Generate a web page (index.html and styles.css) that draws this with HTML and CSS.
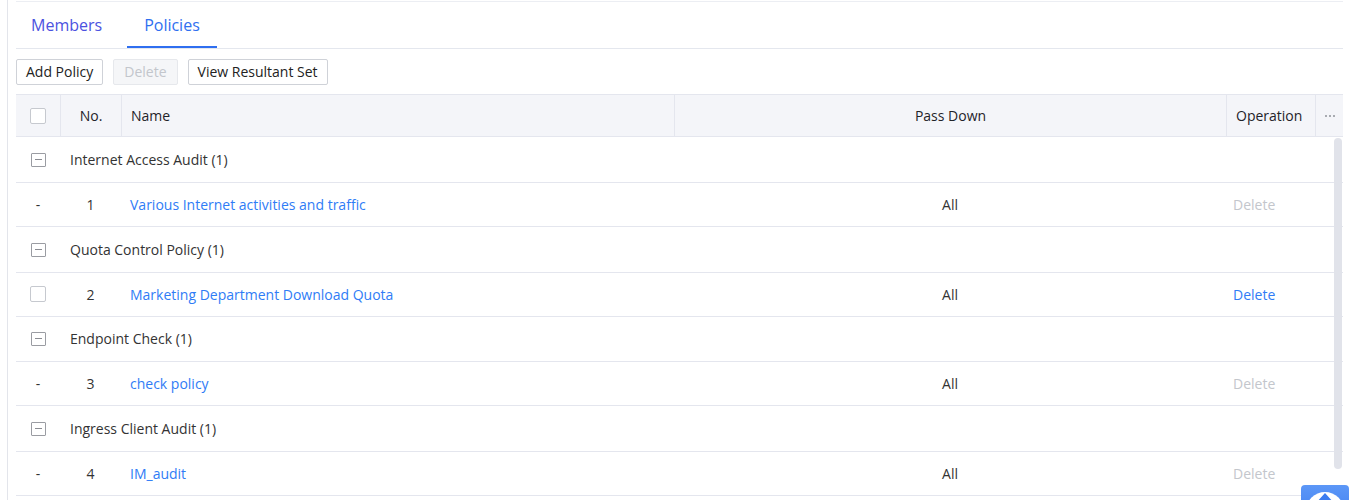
FILE: index.html
```html
<!DOCTYPE html>
<html>
<head>
<meta charset="utf-8">
<link rel="stylesheet" href="styles.css">
</head>
<body>
<div class="page">
  <div class="main">
    <div class="tabs">
      <div class="tab">Members</div>
      <div class="tab active">Policies</div>
    </div>
    <div class="toolbar">
      <button class="btn">Add Policy</button>
      <button class="btn disabled">Delete</button>
      <button class="btn">View Resultant Set</button>
    </div>
    <div class="grid">
      <div class="row head">
        <div class="cell c-check"><span class="checkbox"></span></div>
        <div class="cell c-no sep">No.</div>
        <div class="cell c-name sep">Name</div>
        <div class="cell c-pass sep">Pass Down</div>
        <div class="cell c-op sep">Operation</div>
        <div class="cell c-more sep"><span class="dots"><i></i><i></i><i></i></span></div>
      </div>
      <div class="body">
        <div class="row group">
          <div class="cell c-check"><span class="minus"></span></div>
          <div class="cell c-group">Internet Access Audit (1)</div>
        </div>
        <div class="row data">
          <div class="cell c-check">-</div>
          <div class="cell c-no">1</div>
          <div class="cell c-name"><a class="link">Various Internet activities and traffic</a></div>
          <div class="cell c-pass">All</div>
          <div class="cell c-op"><span class="op-off">Delete</span></div>
          <div class="cell c-more"></div>
        </div>
        <div class="row group">
          <div class="cell c-check"><span class="minus"></span></div>
          <div class="cell c-group">Quota Control Policy (1)</div>
        </div>
        <div class="row data">
          <div class="cell c-check"><span class="checkbox"></span></div>
          <div class="cell c-no">2</div>
          <div class="cell c-name"><a class="link">Marketing Department Download Quota</a></div>
          <div class="cell c-pass">All</div>
          <div class="cell c-op"><a class="link">Delete</a></div>
          <div class="cell c-more"></div>
        </div>
        <div class="row group short">
          <div class="cell c-check"><span class="minus"></span></div>
          <div class="cell c-group">Endpoint Check (1)</div>
        </div>
        <div class="row data">
          <div class="cell c-check">-</div>
          <div class="cell c-no">3</div>
          <div class="cell c-name"><a class="link">check policy</a></div>
          <div class="cell c-pass">All</div>
          <div class="cell c-op"><span class="op-off">Delete</span></div>
          <div class="cell c-more"></div>
        </div>
        <div class="row group">
          <div class="cell c-check"><span class="minus"></span></div>
          <div class="cell c-group">Ingress Client Audit (1)</div>
        </div>
        <div class="row data">
          <div class="cell c-check">-</div>
          <div class="cell c-no">4</div>
          <div class="cell c-name"><a class="link">IM_audit</a></div>
          <div class="cell c-pass">All</div>
          <div class="cell c-op"><span class="op-off">Delete</span></div>
          <div class="cell c-more"></div>
        </div>
        <div class="scrollbar"></div>
      </div>
    </div>
  </div>
  <div class="backtop">
    <svg width="48" height="40" viewBox="0 0 48 40">
      <circle cx="24" cy="26" r="19" fill="#ffffff"/>
      <path d="M24 8 L33 18 L27.5 18 L27.5 30 L20.5 30 L20.5 18 L15 18 Z" fill="#3b7cf0"/>
    </svg>
  </div>
</div>
</body>
</html>
```

FILE: styles.css
```css
* { box-sizing: border-box; }
html, body {
  margin: 0;
  padding: 0;
  background: #ffffff;
  font-family: "Open Sans", "Noto Sans", Arial, sans-serif;
  font-size: 14px;
  color: #333333;
  overflow: hidden;
}
.page {
  position: relative;
  height: 500px;
  padding-left: 7px;
}
.main {
  height: 500px;
  border-left: 1px solid #e3e5eb;
  padding: 1px 12px 0 8px;
}
.tabs {
  display: flex;
  gap: 10px;
  height: 48px;
  border-top: 1px solid #eceef3;
  border-bottom: 1px solid #e4e7ee;
}
.tab {
  height: 46px;
  padding: 2px 15px 0;
  font-size: 16px;
  color: #4b52e0;
  display: flex;
  align-items: center;
  border-bottom: 2px solid transparent;
}
.tab.active {
  color: #2f6ff0;
  padding: 2px 17px 0;
  border-bottom-color: #2f6ff0;
}
.toolbar {
  display: flex;
  gap: 10px;
  padding: 10px 0 9px;
}
.btn {
  height: 26px;
  padding: 0 9px;
  font-family: inherit;
  font-size: 14px;
  color: #222222;
  background: #ffffff;
  border: 1px solid #cfd2d8;
  border-radius: 2px;
  line-height: 24px;
}
.btn.disabled {
  color: #c3c6cc;
  background: #f5f6f8;
  border-color: #e6e8ec;
  padding: 0 10px;
}
.grid {
  border-top: 1px solid #e4e6ee;
}
.row {
  display: grid;
  grid-template-columns: 44px 61px 553px 552px 89px 28px;
  border-bottom: 1px solid #e4e6ee;
}
.row.head {
  height: 42px;
  background: #f4f5f9;
  color: #1f2329;
}
.row.group {
  height: 46px;
  grid-template-columns: 44px 1283px;
}
.row.group.short { height: 45px; }
.row.data {
  height: 44px;
}
.cell {
  display: flex;
  align-items: center;
  padding: 0 10px;
  white-space: nowrap;
}
.row.group .c-group, .row.data .cell { padding-bottom: 1px; }
.sep { border-left: 1px solid #e4e6ee; }
.c-check { justify-content: center; padding: 0; color: #333; }
.c-no { justify-content: center; padding: 0; }
.c-name { padding-left: 9px; }
.c-pass { justify-content: center; }
.c-op { padding-left: 7px; }
.head .c-op { padding-left: 9px; }
.c-more { justify-content: center; padding: 0; }
.c-group { padding-left: 10px; color: #333333; }
.checkbox {
  width: 16px;
  height: 16px;
  border: 1px solid #c6c9cf;
  border-radius: 2px;
  background: #ffffff;
}
.minus {
  position: relative;
  width: 15px;
  height: 14px;
  border: 1px solid #9a9ca2;
  border-radius: 1px;
}
.minus::after {
  content: "";
  position: absolute;
  left: 3px;
  right: 3px;
  top: 5px;
  height: 1px;
  background: #8a8c92;
}
.dots { display: flex; gap: 2px; }
.dots i {
  width: 2px;
  height: 2px;
  border-radius: 1px;
  background: #8f9298;
}
.link { color: #2f7cf6; text-decoration: none; }
.op-off { color: #c3c6cc; }
.body { position: relative; }
.scrollbar {
  position: absolute;
  right: 1px;
  top: 1px;
  width: 8px;
  height: 331px;
  border-radius: 4px;
  background: #e1e3ea;
}
.backtop {
  position: absolute;
  left: 1301px;
  top: 485px;
  width: 48px;
  height: 40px;
  border-radius: 4px;
  overflow: hidden;
  background: linear-gradient(#5c97f7, #3b7cf0);
}
.backtop svg { display: block; }
```
